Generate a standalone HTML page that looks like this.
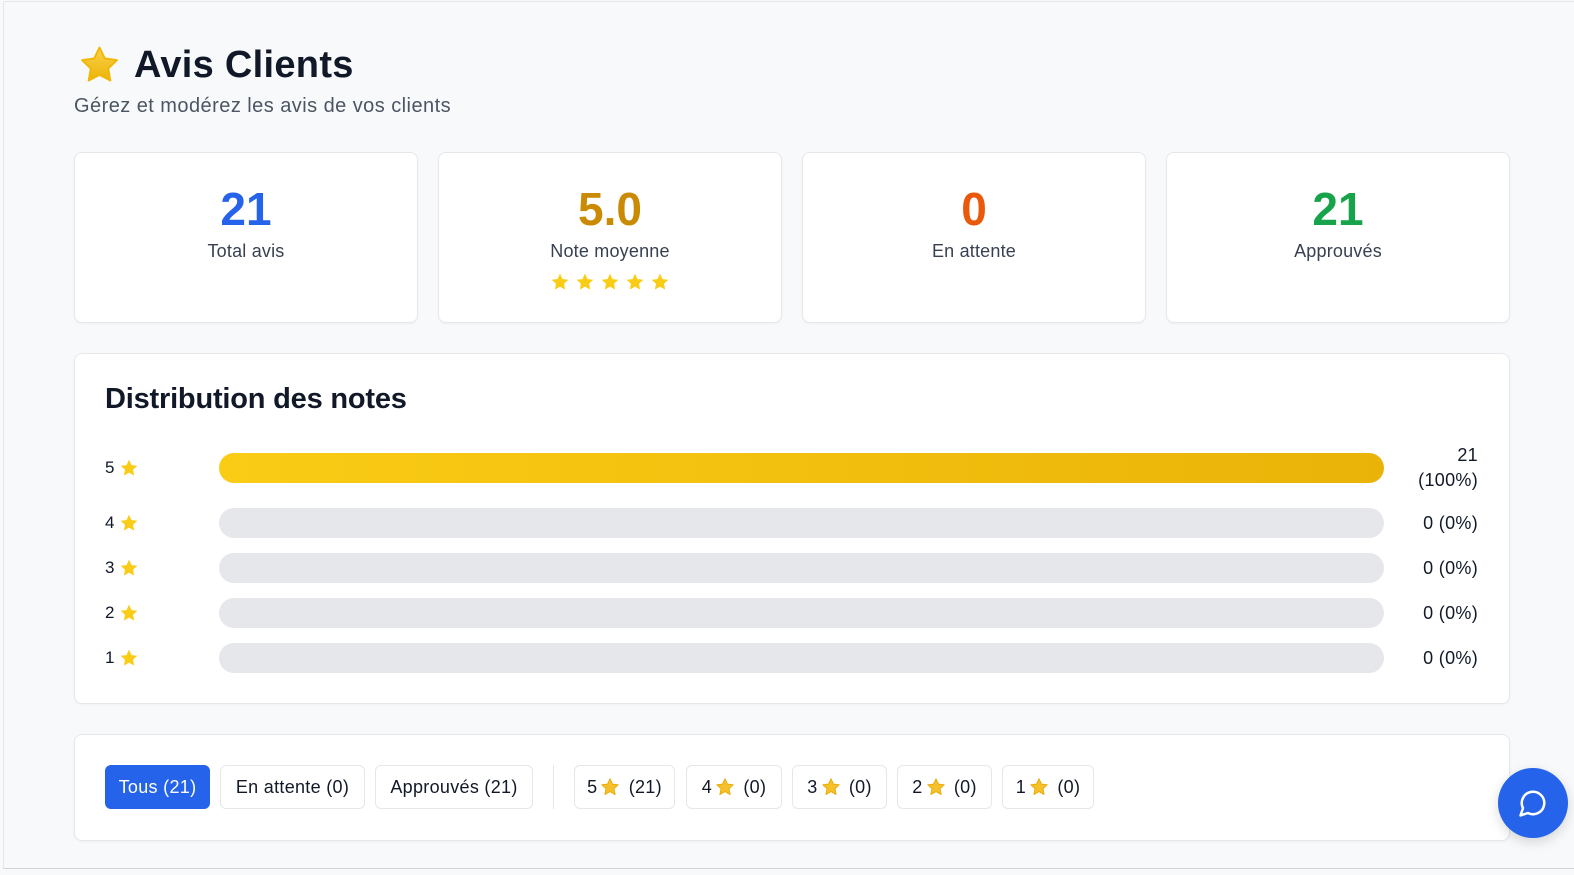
<!DOCTYPE html>
<html><head><meta charset="utf-8"><style>
*{box-sizing:border-box;margin:0;padding:0}
body{width:1574px;height:875px;background:#f8f9fb;font-family:"Liberation Sans",sans-serif;position:relative;overflow:hidden;color:#111827}
.frame{position:absolute;left:3px;top:1px;right:0;bottom:6px;border-left:1px solid #e5e7eb;border-top:1px solid #e5e7eb;border-bottom:1px solid #d1d5db}
.card{position:absolute;background:#fff;border:1px solid #e5e7eb;border-radius:8px;box-shadow:0 1px 2px rgba(0,0,0,.04)}
.stat{top:152px;width:344px;height:171px;text-align:center}
.num{font-size:46px;font-weight:bold;margin-top:31px;line-height:50px}
.lbl{font-size:18px;color:#374151;margin-top:7px;letter-spacing:.2px}
.row{position:absolute;left:105px;font-size:17px;display:flex;align-items:center;gap:5px}
.bar{position:absolute;left:219px;width:1165px;height:30px;border-radius:15px;background:#e5e7eb}
.pct{position:absolute;right:96px;font-size:18px;text-align:right;line-height:25px;letter-spacing:.3px}
.btn{position:absolute;top:765px;height:44px;border:1px solid #e5e7eb;border-radius:6px;background:#fff;font-size:18px;letter-spacing:.3px;display:flex;align-items:center;justify-content:center;gap:3px;color:#111827}
</style></head><body>
<div class="frame"></div>
<svg style="position:absolute;left:79px;top:45px" width="41" height="40" viewBox="0 0 24 24"><defs><linearGradient id="g" x1="0" y1="0" x2="0" y2="1"><stop offset="0" stop-color="#fcd34d"/><stop offset="1" stop-color="#eab308"/></linearGradient></defs><path d="M12 1.5l3.2 6.6 7.2 1-5.2 5 1.3 7.2L12 17.9l-6.5 3.4 1.3-7.2-5.2-5 7.2-1z" fill="url(#g)" stroke="#f2b705" stroke-width="1.2" stroke-linejoin="round"/></svg>
<div style="position:absolute;left:134px;top:44px;font-size:38px;font-weight:bold;color:#111827;letter-spacing:.3px">Avis Clients</div>
<div style="position:absolute;left:74px;top:95px;font-size:20px;color:#4b5563;letter-spacing:.45px">Gérez et modérez les avis de vos clients</div>

<div class="card stat" style="left:74px"><div class="num" style="color:#2563eb">21</div><div class="lbl">Total avis</div></div>
<div class="card stat" style="left:438px"><div class="num" style="color:#ca8a04">5.0</div><div class="lbl">Note moyenne</div>
<div style="margin-top:10px;display:flex;justify-content:center;gap:5px">
<svg width="20" height="20" viewBox="0 0 24 24"><path d="M12 2l3 6.5 7 .8-5.2 4.8 1.4 7L12 17.6 5.8 21.1l1.4-7L2 9.3l7-.8z" fill="#facc15"/></svg>
<svg width="20" height="20" viewBox="0 0 24 24"><path d="M12 2l3 6.5 7 .8-5.2 4.8 1.4 7L12 17.6 5.8 21.1l1.4-7L2 9.3l7-.8z" fill="#facc15"/></svg>
<svg width="20" height="20" viewBox="0 0 24 24"><path d="M12 2l3 6.5 7 .8-5.2 4.8 1.4 7L12 17.6 5.8 21.1l1.4-7L2 9.3l7-.8z" fill="#facc15"/></svg>
<svg width="20" height="20" viewBox="0 0 24 24"><path d="M12 2l3 6.5 7 .8-5.2 4.8 1.4 7L12 17.6 5.8 21.1l1.4-7L2 9.3l7-.8z" fill="#facc15"/></svg>
<svg width="20" height="20" viewBox="0 0 24 24"><path d="M12 2l3 6.5 7 .8-5.2 4.8 1.4 7L12 17.6 5.8 21.1l1.4-7L2 9.3l7-.8z" fill="#facc15"/></svg>
</div></div>
<div class="card stat" style="left:802px"><div class="num" style="color:#ea580c">0</div><div class="lbl">En attente</div></div>
<div class="card stat" style="left:1166px"><div class="num" style="color:#16a34a">21</div><div class="lbl">Approuvés</div></div>

<div class="card" style="left:74px;top:353px;width:1436px;height:351px"></div>
<div style="position:absolute;left:105px;top:383px;font-size:29px;font-weight:bold;letter-spacing:-.2px">Distribution des notes</div>

<div class="row" style="top:458px">5 <svg width="20" height="20" viewBox="0 0 24 24"><path d="M12 2l3 6.5 7 .8-5.2 4.8 1.4 7L12 17.6 5.8 21.1l1.4-7L2 9.3l7-.8z" fill="#facc15"/></svg></div>
<div class="bar" style="top:453px;background:linear-gradient(90deg,#facc15,#eab308)"></div>
<div class="pct" style="top:443px">21<br>(100%)</div>

<div class="row" style="top:513px">4 <svg width="20" height="20" viewBox="0 0 24 24"><path d="M12 2l3 6.5 7 .8-5.2 4.8 1.4 7L12 17.6 5.8 21.1l1.4-7L2 9.3l7-.8z" fill="#facc15"/></svg></div>
<div class="bar" style="top:508px"></div><div class="pct" style="top:511px">0 (0%)</div>
<div class="row" style="top:558px">3 <svg width="20" height="20" viewBox="0 0 24 24"><path d="M12 2l3 6.5 7 .8-5.2 4.8 1.4 7L12 17.6 5.8 21.1l1.4-7L2 9.3l7-.8z" fill="#facc15"/></svg></div>
<div class="bar" style="top:553px"></div><div class="pct" style="top:556px">0 (0%)</div>
<div class="row" style="top:603px">2 <svg width="20" height="20" viewBox="0 0 24 24"><path d="M12 2l3 6.5 7 .8-5.2 4.8 1.4 7L12 17.6 5.8 21.1l1.4-7L2 9.3l7-.8z" fill="#facc15"/></svg></div>
<div class="bar" style="top:598px"></div><div class="pct" style="top:601px">0 (0%)</div>
<div class="row" style="top:648px">1 <svg width="20" height="20" viewBox="0 0 24 24"><path d="M12 2l3 6.5 7 .8-5.2 4.8 1.4 7L12 17.6 5.8 21.1l1.4-7L2 9.3l7-.8z" fill="#facc15"/></svg></div>
<div class="bar" style="top:643px"></div><div class="pct" style="top:646px">0 (0%)</div>

<div class="card" style="left:74px;top:734px;width:1436px;height:107px"></div>
<div class="btn" style="left:105px;width:105px;background:#2563eb;border-color:#2563eb;color:#fff">Tous (21)</div>
<div class="btn" style="left:220px;width:145px">En attente (0)</div>
<div class="btn" style="left:375px;width:158px">Approuvés (21)</div>
<div style="position:absolute;left:553px;top:765px;width:1px;height:44px;background:#e5e7eb"></div>
<div class="btn" style="left:574px;width:101px">5<svg width="20" height="20" viewBox="0 0 24 24"><path d="M12 2l3 6.5 7 .8-5.2 4.8 1.4 7L12 17.6 5.8 21.1l1.4-7L2 9.3l7-.8z" fill="#f5c02a" stroke="#e5a800" stroke-width="1" stroke-linejoin="round"/></svg>&nbsp;(21)</div>
<div class="btn" style="left:686px;width:96px">4<svg width="20" height="20" viewBox="0 0 24 24"><path d="M12 2l3 6.5 7 .8-5.2 4.8 1.4 7L12 17.6 5.8 21.1l1.4-7L2 9.3l7-.8z" fill="#f5c02a" stroke="#e5a800" stroke-width="1" stroke-linejoin="round"/></svg>&nbsp;(0)</div>
<div class="btn" style="left:792px;width:95px">3<svg width="20" height="20" viewBox="0 0 24 24"><path d="M12 2l3 6.5 7 .8-5.2 4.8 1.4 7L12 17.6 5.8 21.1l1.4-7L2 9.3l7-.8z" fill="#f5c02a" stroke="#e5a800" stroke-width="1" stroke-linejoin="round"/></svg>&nbsp;(0)</div>
<div class="btn" style="left:897px;width:95px">2<svg width="20" height="20" viewBox="0 0 24 24"><path d="M12 2l3 6.5 7 .8-5.2 4.8 1.4 7L12 17.6 5.8 21.1l1.4-7L2 9.3l7-.8z" fill="#f5c02a" stroke="#e5a800" stroke-width="1" stroke-linejoin="round"/></svg>&nbsp;(0)</div>
<div class="btn" style="left:1002px;width:92px">1<svg width="20" height="20" viewBox="0 0 24 24"><path d="M12 2l3 6.5 7 .8-5.2 4.8 1.4 7L12 17.6 5.8 21.1l1.4-7L2 9.3l7-.8z" fill="#f5c02a" stroke="#e5a800" stroke-width="1" stroke-linejoin="round"/></svg>&nbsp;(0)</div>

<div style="position:absolute;left:1498px;top:768px;width:70px;height:70px;border-radius:50%;background:#2563eb;box-shadow:0 4px 12px rgba(0,0,0,.15);display:flex;align-items:center;justify-content:center">
<svg width="30" height="30" viewBox="0 0 24 24" fill="none" stroke="#fff" stroke-width="2" stroke-linecap="round" stroke-linejoin="round"><path d="M7.9 20A9 9 0 1 0 4 16.1L2 22z"/></svg></div>
</body></html>
